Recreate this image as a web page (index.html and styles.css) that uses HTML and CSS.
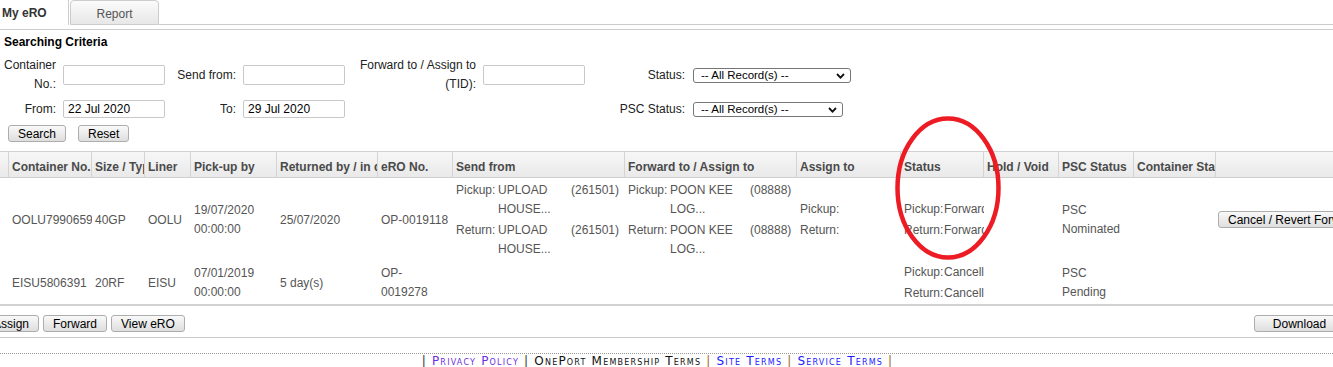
FILE: index.html
```html
<!DOCTYPE html>
<html>
<head>
<meta charset="utf-8">
<title>My eRO</title>
<link rel="stylesheet" href="styles.css">
</head>
<body>
<div class="page">
  <div class="tabs">
    <div class="tab tab-active">My eRO</div>
    <div class="tab tab-inactive">Report</div>
    <div class="tab-fill"></div>
  </div>

  <div class="panel">
    <div class="section-title">Searching Criteria</div>
    <div class="criteria">
      <label class="lbl">Container No.:</label>
      <input class="txt" type="text">
      <label class="lbl">Send from:</label>
      <input class="txt" type="text">
      <label class="lbl">Forward to / Assign to (TID):</label>
      <input class="txt" type="text">
      <label class="lbl">Status:</label>
      <div class="sel sel-status">
        <select><option>-- All Record(s) --</option></select>
        <svg class="chev" width="9" height="6" viewBox="0 0 9 6"><path d="M1 1 L4.5 4.6 L8 1" fill="none" stroke="#111" stroke-width="1.8"/></svg>
      </div>

      <label class="lbl">From:</label>
      <input class="txt txt-date" type="text" value="22 Jul 2020">
      <label class="lbl">To:</label>
      <input class="txt txt-date" type="text" value="29 Jul 2020">
      <span></span>
      <span></span>
      <label class="lbl">PSC Status:</label>
      <div class="sel sel-psc">
        <select><option>-- All Record(s) --</option></select>
        <svg class="chev" width="9" height="6" viewBox="0 0 9 6"><path d="M1 1 L4.5 4.6 L8 1" fill="none" stroke="#111" stroke-width="1.8"/></svg>
      </div>
    </div>
    <div class="actions">
      <button class="btn">Search</button>
      <button class="btn">Reset</button>
    </div>
  </div>

  <div class="grid-wrap">
    <table class="grid">
      <colgroup>
        <col class="c-chk"><col class="c-cont"><col class="c-size"><col class="c-liner"><col class="c-pick">
        <col class="c-ret"><col class="c-ero"><col class="c-send"><col class="c-fwd"><col class="c-asg">
        <col class="c-stat"><col class="c-hold"><col class="c-psc"><col class="c-cst"><col class="c-act">
      </colgroup>
      <thead>
        <tr>
          <th></th>
          <th>Container No.</th>
          <th>Size / Type</th>
          <th>Liner</th>
          <th>Pick-up by</th>
          <th>Returned by / in days</th>
          <th>eRO No.</th>
          <th>Send from</th>
          <th>Forward to / Assign to</th>
          <th>Assign to</th>
          <th>Status</th>
          <th>Hold / Void</th>
          <th>PSC Status</th>
          <th>Container Status</th>
          <th class="th-last"></th>
        </tr>
      </thead>
      <tbody>
        <tr>
          <td></td>
          <td>OOLU7990659</td>
          <td>40GP</td>
          <td>OOLU</td>
          <td>19/07/2020 00:00:00</td>
          <td>25/07/2020</td>
          <td>OP-0019118</td>
          <td>
            <div class="party party-send"><span>Pickup:</span><span>UPLOAD HOUSE...</span><span>(261501)</span></div>
            <div class="party party-send"><span>Return:</span><span>UPLOAD HOUSE...</span><span>(261501)</span></div>
          </td>
          <td>
            <div class="party party-fwd"><span>Pickup:</span><span>POON KEE LOG...</span><span>(08888)</span></div>
            <div class="party party-fwd"><span>Return:</span><span>POON KEE LOG...</span><span>(08888)</span></div>
          </td>
          <td>
            <div class="sub">Pickup:</div>
            <div class="sub">Return:</div>
          </td>
          <td class="clip">
            <div class="stat"><span>Pickup:</span><span>Forwarded</span></div>
            <div class="stat"><span>Return:</span><span>Forwarded</span></div>
          </td>
          <td></td>
          <td>PSC Nominated</td>
          <td></td>
          <td class="td-act"><button class="btn btn-nowrap">Cancel / Revert Forward</button></td>
        </tr>
        <tr>
          <td></td>
          <td>EISU5806391</td>
          <td>20RF</td>
          <td>EISU</td>
          <td>07/01/2019 00:00:00</td>
          <td>5 day(s)</td>
          <td>OP-<br>0019278</td>
          <td></td>
          <td></td>
          <td></td>
          <td class="clip">
            <div class="stat"><span>Pickup:</span><span>Cancelled</span></div>
            <div class="stat"><span>Return:</span><span>Cancelled</span></div>
          </td>
          <td></td>
          <td>PSC Pending</td>
          <td></td>
          <td class="td-act"></td>
        </tr>
      </tbody>
    </table>
  </div>

  <div class="bottom-wrap">
    <div class="bottom-bar">
      <div class="btn-group">
        <button class="btn">Assign</button>
        <button class="btn">Forward</button>
        <button class="btn">View eRO</button>
      </div>
      <button class="btn btn-wide">Download</button>
    </div>
  </div>

  <div class="footer">
    <span class="sep sep-dark">|</span> <a href="#" class="lk lk-visited">Privacy Policy</a>
    <span class="sep sep-dark">|</span> <span class="plain">OnePort Membership Terms</span>
    <span class="sep">|</span> <a href="#" class="lk">Site Terms</a>
    <span class="sep">|</span> <a href="#" class="lk">Service Terms</a>
    <span class="sep">|</span>
  </div>

  <svg class="annot" width="108" height="146" viewBox="0 0 108 146">
    <ellipse cx="53" cy="72" rx="50.5" ry="69.5" fill="none" stroke="#ed1c24" stroke-width="4.5"/>
  </svg>
</div>
</body>
</html>
```

FILE: styles.css
```css
* { box-sizing: border-box; }

html, body {
  margin: 0;
  padding: 0;
  overflow: hidden;
  background: #fff;
}

body {
  font-family: "Liberation Sans", Arial, sans-serif;
  font-size: 12px;
  color: #222;
}

.page {
  position: relative;
  width: 1333px;
  overflow: hidden;
}

/* Tabs */
.tabs {
  display: flex;
  height: 25px;
}

.tab {
  height: 25px;
  padding-top: 6px;
  line-height: 15px;
}

.tab-active {
  width: 69px;
  padding-left: 2px;
  font-weight: bold;
  color: #333;
  background: #fff;
  border-right: 1px solid #ccc;
}

.tab-inactive {
  width: 89px;
  margin-left: 1px;
  text-align: center;
  color: #555;
  border: 1px solid #ccc;
  border-radius: 4px 4px 0 0;
  background: linear-gradient(#fbfbfb, #e7e7e7);
}

.tab-fill {
  flex: 1;
  border-bottom: 1px solid #ccc;
}

/* Search panel */
.panel {
  margin-top: 4px;
  border-top: 1px solid #ccc;
}

.section-title {
  padding: 5px 0 0 4px;
  line-height: 15px;
  font-weight: bold;
  color: #000;
}

.criteria {
  display: grid;
  grid-template-columns: 56px 102px 64px 102px 124px 102px 93px auto;
  grid-template-rows: 38px 22px;
  column-gap: 7px;
  row-gap: 4px;
  margin-top: 6px;
  align-items: center;
}

.lbl {
  text-align: right;
  line-height: 19px;
  color: #222;
}

.txt {
  width: 102px;
  height: 20px;
  padding: 0 4px;
  border: 1px solid #c8c8c8;
  border-radius: 2px;
  font: 12px "Liberation Sans", Arial, sans-serif;
  color: #000;
  background: #fff;
}

.txt-date {
  height: 18px;
}

.sel {
  position: relative;
  height: 15px;
  margin-left: 1px;
}

.sel-status { width: 158px; }
.sel-psc { width: 150px; }

.sel select {
  appearance: none;
  -webkit-appearance: none;
  width: 100%;
  height: 15px;
  margin: 0;
  padding: 0 0 0 7px;
  border: 1px solid #767676;
  border-radius: 3px;
  background: #fff;
  font: 11.5px "Liberation Sans", Arial, sans-serif;
  line-height: 13px;
  color: #000;
}

.chev {
  position: absolute;
  right: 6px;
  top: 5px;
  pointer-events: none;
}

.actions {
  display: flex;
  gap: 12px;
  padding-left: 8px;
  margin-top: 5px;
}

.btn {
  height: 17px;
  margin: 0;
  padding: 0 9px;
  line-height: 15px;
  border: 1px solid #adadad;
  border-radius: 3px;
  background: linear-gradient(#f9f9f9, #dedede);
  font: 12px "Liberation Sans", Arial, sans-serif;
  color: #000;
}

.btn-nowrap { white-space: nowrap; }
.btn-wide { width: 91px; }

/* Grid */
.grid-wrap {
  margin-top: 9px;
  overflow: hidden;
}

.grid {
  width: 1376px;
  table-layout: fixed;
  border-collapse: separate;
  border-spacing: 0;
  border-top: 1px solid #d2d2d2;
  border-bottom: 2px solid #d2d2d2;
}

.c-chk { width: 9px; }
.c-cont { width: 83px; }
.c-size { width: 53px; }
.c-liner { width: 46px; }
.c-pick { width: 86px; }
.c-ret { width: 101px; }
.c-ero { width: 75px; }
.c-send { width: 172px; }
.c-fwd { width: 172px; }
.c-asg { width: 104px; }
.c-stat { width: 83px; }
.c-hold { width: 75px; }
.c-psc { width: 75px; }
.c-cst { width: 82px; }
.c-act { width: 160px; }

.grid th {
  height: 26px;
  padding: 4px 3px 0;
  text-align: left;
  font-weight: bold;
  color: #4a4a4a;
  white-space: nowrap;
  overflow: hidden;
  background: linear-gradient(#f7f7f7, #e9e9e9);
  border-bottom: 1px solid #cfcfcf;
  border-right: 1px solid #d4d4d4;
}

.grid th.th-last { border-right: 0; }

.grid td {
  padding: 2px 3px 0;
  line-height: 19px;
  color: #555;
  vertical-align: middle;
  overflow: hidden;
}

.grid td.td-act { padding-left: 2px; }

.party {
  display: grid;
  padding: 1px 0;
}

.party-send { grid-template-columns: 42px 73px auto; }
.party-fwd { grid-template-columns: 42px 80px auto; }

.sub { padding: 1px 0; }

.clip { white-space: nowrap; }

.stat {
  display: grid;
  grid-template-columns: 40px auto;
  padding: 1px 0;
}

/* Bottom bar */
.bottom-wrap {
  overflow: hidden;
  border-bottom: 1px solid #ccc;
}

.bottom-bar {
  display: flex;
  justify-content: space-between;
  width: 1362px;
  margin-left: -17px;
  padding: 9px 0 5px;
}

.btn-group {
  display: flex;
  gap: 4px;
}

/* Footer */
.footer {
  margin-top: 15px;
  padding: 1px 18px 0 0;
  border-top: 1px dotted #9a9a9a;
  text-align: center;
  font: 12px "DejaVu Sans", Verdana, sans-serif;
  font-variant: small-caps;
  letter-spacing: 1.2px;
  line-height: 13px;
  color: #111;
}

.sep { color: #9b6a2c; }
.sep-dark { color: #333; }
.lk { color: #1a1aff; text-decoration: none; }
.lk-visited { color: #6a2fe0; }
.plain { color: #111; }

/* Annotation */
.annot {
  position: absolute;
  left: 895px;
  top: 116px;
}
```
